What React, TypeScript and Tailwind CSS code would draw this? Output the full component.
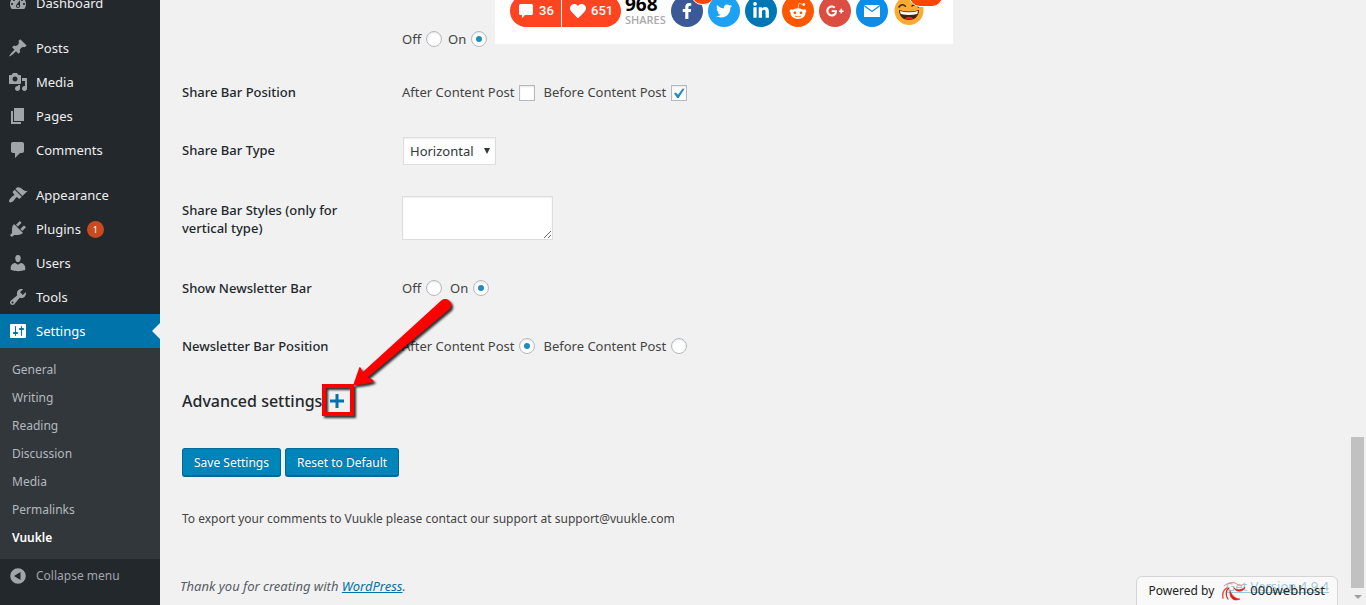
import React from "react";
import { FaFacebookF, FaTwitter, FaLinkedinIn, FaRedditAlien, FaGooglePlusG, FaHeart } from "react-icons/fa";

const icons = {
  dashboard:
    "M3.76 16h12.48c1.1-1.37 1.76-3.11 1.76-5 0-4.42-3.58-8-8-8s-8 3.58-8 8c0 1.89.66 3.63 1.76 5zM10 4c.55 0 1 .45 1 1s-.45 1-1 1-1-.45-1-1 .45-1 1-1zM6 6c.55 0 1 .45 1 1s-.45 1-1 1-1-.45-1-1 .45-1 1-1zm8 0c.55 0 1 .45 1 1s-.45 1-1 1-1-.45-1-1 .45-1 1-1zm-5.37 5.55L12 7v6c0 1.1-.9 2-2 2s-2-.9-2-2c0-.57.24-1.08.63-1.45zM4 10c.55 0 1 .45 1 1s-.45 1-1 1-1-.45-1-1 .45-1 1-1zm12 0c.55 0 1 .45 1 1s-.45 1-1 1-1-.45-1-1 .45-1 1-1zm-5 3c0-.55-.45-1-1-1s-1 .45-1 1 .45 1 1 1 1-.45 1-1z",
  posts:
    "M10.44 3.02l1.82-1.82 6.36 6.35-1.83 1.82c-1.05-.68-2.48-.57-3.41.36l-.75.75c-.92.93-1.04 2.35-.35 3.41l-1.83 1.82-2.41-2.41-2.8 2.79c-.42.42-3.38 2.71-3.8 2.29s1.86-3.39 2.28-3.81l2.79-2.79L4.1 9.36l1.83-1.82c1.05.69 2.48.57 3.4-.36l.75-.75c.93-.92 1.05-2.35.36-3.41z",
  media:
    "M13 11V4c0-.55-.45-1-1-1h-1.67L9 1H5L3.67 3H2c-.55 0-1 .45-1 1v7c0 .55.45 1 1 1h10c.55 0 1-.45 1-1zM7 4.5c1.38 0 2.5 1.12 2.5 2.5S8.38 9.5 7 9.5 4.5 8.38 4.5 7 5.62 4.5 7 4.5zM14 6h5v10.5c0 1.38-1.12 2.5-2.5 2.5S14 17.88 14 16.5s1.12-2.5 2.5-2.5c.17 0 .34.02.5.05V9h-3V6zm-4 8.05V13h2v3.5c0 1.38-1.12 2.5-2.5 2.5S7 17.88 7 16.5 8.12 14 9.5 14c.17 0 .34.02.5.05z",
  pages: "M6 15V2h10v13H6zm-1 1h8v2H3V5h2v11z",
  comments: "M5 2h9c1.1 0 2 .9 2 2v7c0 1.1-.9 2-2 2h-2l-5 5v-5H5c-1.1 0-2-.9-2-2V4c0-1.1.9-2 2-2z",
  appearance:
    "M14.48 11.06L7.41 3.99l1.5-1.5c.5-.56 2.3-.47 3.51.32 1.21.8 1.43 1.28 2.91 2.1 1.18.64 2.45 1.26 4.45.85zm-.71.71L6.7 4.7 4.93 6.47c-.39.39-.39 1.02 0 1.41l1.06 1.06c.39.39.39 1.03 0 1.42-.6.6-1.43 1.11-2.21 1.69-.35.26-.7.53-1.01.84C1.43 14.23.4 16.08 1.4 17.07c.99 1 2.84-.03 4.18-1.36.31-.31.58-.66.85-1.02.57-.78 1.08-1.61 1.69-2.21.39-.39 1.02-.39 1.41 0l1.06 1.06c.39.39 1.02.39 1.41 0z",
  plugins:
    "M13.11 4.36L9.87 7.6 8 5.73l3.24-3.24c.35-.34 1.05-.2 1.56.32.52.51.66 1.21.31 1.55zm-8 1.77l.91-1.12 9.01 9.01-1.19.84c-.71.71-2.63 1.16-3.82 1.16H6.14L4.9 17.26c-.59.59-1.54.59-2.12 0-.59-.58-.59-1.53 0-2.12l1.24-1.24v-3.88c0-1.13.4-3.19 1.09-3.89zm7.26 3.97l3.24-3.24c.34-.35 1.04-.21 1.55.31.52.51.66 1.21.31 1.55l-3.24 3.25z",
  users:
    "M10 9.25c-2.27 0-2.73-3.44-2.73-3.44C7 4.02 7.82 2 9.97 2c2.16 0 2.98 2.02 2.71 3.81 0 0-.41 3.44-2.68 3.44zm0 2.57L12.72 10c2.39 0 4.52 2.33 4.52 4.53v2.49s-3.65 1.13-7.24 1.13c-3.65 0-7.24-1.13-7.24-1.13v-2.49c0-2.25 1.94-4.48 4.47-4.48z",
  tools:
    "M16.68 9.77c-1.34 1.34-3.3 1.67-4.95.99l-5.41 6.52c-.99.99-2.59.99-3.58 0s-.99-2.59 0-3.57l6.52-5.42c-.68-1.65-.35-3.61.99-4.95 1.28-1.28 3.12-1.62 4.72-1.06l-2.89 2.89 2.82 2.82 2.86-2.87c.53 1.58.18 3.39-1.08 4.65zM3.81 16.21c.4.39 1.04.39 1.43 0 .4-.4.4-1.04 0-1.43-.39-.4-1.03-.4-1.43 0-.39.39-.39 1.03 0 1.43z",
  settings:
    "M18 16V4c0-.55-.45-1-1-1H3c-.55 0-1 .45-1 1v12c0 .55.45 1 1 1h14c.55 0 1-.45 1-1zM8 11h1c.55 0 1 .45 1 1s-.45 1-1 1H8v1.5c0 .28-.22.5-.5.5s-.5-.22-.5-.5V13H6c-.55 0-1-.45-1-1s.45-1 1-1h1V5.5c0-.28.22-.5.5-.5s.5.22.5.5V11zm5-2h-1c-.55 0-1-.45-1-1s.45-1 1-1h1V5.5c0-.28.22-.5.5-.5s.5.22.5.5V7h1c.55 0 1 .45 1 1s-.45 1-1 1h-1v5.5c0 .28-.22.5-.5.5s-.5-.22-.5-.5V9z",
  collapse: "M10 2.2a7.8 7.8 0 1 0 0 15.6a7.8 7.8 0 1 0 0-15.6zM12.5 6v8L6 10z",
};

type IconName = keyof typeof icons;

function Icon({ name }: { name: IconName }) {
  return (
    <svg viewBox="0 0 20 20" className="size-5 shrink-0 fill-current" fillRule="evenodd" aria-hidden="true">
      <path d={icons[name]} />
    </svg>
  );
}

function MenuItem({ icon, label, badge, active }: { icon: IconName; label: string; badge?: string; active?: boolean }) {
  return (
    <li>
      <a
        href="#"
        className={
          active
            ? "relative flex h-[34px] items-center gap-2 bg-[#0073aa] px-2 text-white"
            : "flex h-[34px] items-center gap-2 px-2 text-[#eeeeee]"
        }
      >
        <span className={active ? "text-white" : "text-[#a0a5aa]"}>
          <Icon name={icon} />
        </span>
        <span>{label}</span>
        {badge && (
          <span className="-ml-0.5 flex size-[17px] items-center justify-center rounded-full bg-[#ca4a1f] text-[9px] leading-none text-white">
            {badge}
          </span>
        )}
        {active && (
          <span className="absolute right-0 top-1/2 -translate-y-1/2 border-y-8 border-r-8 border-y-transparent border-r-[#f1f1f1]" />
        )}
      </a>
    </li>
  );
}

const submenu = ["General", "Writing", "Reading", "Discussion", "Media", "Permalinks", "Vuukle"];

function Sidebar() {
  return (
    <nav className="w-40 shrink-0 overflow-hidden bg-[#23282d] text-[13px] leading-[18px]">
      <ul className="-mt-3.5">
        <MenuItem icon="dashboard" label="Dashboard" />
        <li className="h-[11px]" />
        <MenuItem icon="posts" label="Posts" />
        <MenuItem icon="media" label="Media" />
        <MenuItem icon="pages" label="Pages" />
        <MenuItem icon="comments" label="Comments" />
        <li className="h-[11px]" />
        <MenuItem icon="appearance" label="Appearance" />
        <MenuItem icon="plugins" label="Plugins" badge="1" />
        <MenuItem icon="users" label="Users" />
        <MenuItem icon="tools" label="Tools" />
        <MenuItem icon="settings" label="Settings" active />
      </ul>
      <ul className="bg-[#32373c] pb-[7px] pt-2 text-xs">
        {submenu.map((s) => (
          <li key={s}>
            <a
              href="#"
              className={
                s === "Vuukle"
                  ? "flex h-7 items-center px-3 font-semibold text-white"
                  : "flex h-7 items-center px-3 text-[#b4b9be]"
              }
            >
              {s}
            </a>
          </li>
        ))}
      </ul>
      <button className="flex h-[34px] w-full items-center gap-2 px-2 text-xs text-[#a0a5aa]">
        <Icon name="collapse" />
        Collapse menu
      </button>
    </nav>
  );
}

function Choice({ type, name, label, checked }: { type: "radio" | "checkbox"; name: string; label: string; checked?: boolean }) {
  return (
    <label className="flex items-center gap-[5px]">
      <span>{label}</span>
      {type === "radio" ? (
        <input
          type="radio"
          name={name}
          defaultChecked={checked}
          className="grid size-4 appearance-none place-items-center rounded-full border border-[#b4b9be] bg-white shadow-[inset_0_1px_2px_rgba(0,0,0,0.1)] checked:before:size-1.5 checked:before:rounded-full checked:before:bg-[#1e8cbe]"
        />
      ) : (
        <span className="relative mt-0.5 flex">
          <input
            type="checkbox"
            name={name}
            defaultChecked={checked}
            className="peer size-4 appearance-none border border-[#b4b9be] bg-white shadow-[inset_0_1px_2px_rgba(0,0,0,0.1)]"
          />
          <svg viewBox="0 0 16 16" className="pointer-events-none absolute inset-0 hidden size-4 peer-checked:block" aria-hidden="true">
            <path d="M3 8.600l2-1.100 2 2.300 4.600-6.200 2 .2-6 9.200h-1.400z" fill="#1e8cbe" />
          </svg>
        </span>
      )}
    </label>
  );
}

function Row({ label, tall, children }: { label: React.ReactNode; tall?: boolean; children: React.ReactNode }) {
  return (
    <div className={tall ? "flex h-20 items-center" : "flex h-[58px] items-center"}>
      <div className="w-[220px] shrink-0 pr-10 text-[13px] font-medium leading-[18px] text-[#23282d]">{label}</div>
      <div className="flex items-center gap-2">{children}</div>
    </div>
  );
}

function Social({ label, color, children }: { label: string; color: string; children: React.ReactNode }) {
  return (
    <a href="#" aria-label={label} className={`relative flex size-8 items-center justify-center rounded-full text-white ${color}`}>
      {children}
    </a>
  );
}

function ShareBar() {
  return (
    <div className="h-11 w-[458px] overflow-hidden bg-white pl-[15px]">
      <div className="-mt-[5px] flex h-8 items-center">
        <div className="flex h-8 w-[111px] shrink-0 overflow-hidden rounded-full bg-[#ff4422] font-[Roboto] text-[13px] font-medium text-white">
          <button className="flex w-[52px] items-center gap-1.5 border-r border-white pl-[9px]">
            <svg viewBox="0 0 14 14" className="size-3.5 fill-current" aria-hidden="true">
              <path d="M1.500 0h11A1.500 1.500 0 0 1 14 1.500v8a1.500 1.500 0 0 1-1.500 1.500H6L3 14v-3H1.500A1.500 1.500 0 0 1 0 9.500v-8A1.500 1.500 0 0 1 1.500 0z" />
            </svg>
            36
          </button>
          <button className="flex items-center gap-[5px] pl-2">
            <FaHeart className="size-4" />
            651
          </button>
        </div>
        <div className="w-[50px] shrink-0 pl-1">
          <div className="font-['Open_Sans'] text-[19px] font-bold leading-[18px] text-black">968</div>
          <div className="font-['Open_Sans'] text-[11px] font-semibold leading-[14px] text-[#aaaaaa]">SHARES</div>
        </div>
        <div className="flex gap-[5px]">
          <Social label="Facebook" color="bg-[#3b5998]">
            <FaFacebookF className="size-4" />
            <span className="absolute -top-3 left-5 h-[22px] w-6 rounded-full border border-white bg-[#ff4500]" />
          </Social>
          <Social label="Twitter" color="bg-[#1da1f2]"><FaTwitter className="size-4" /></Social>
          <Social label="LinkedIn" color="bg-[#0077b5]"><FaLinkedinIn className="size-[18px]" /></Social>
          <Social label="Reddit" color="bg-[#ff5700]"><FaRedditAlien className="size-[18px]" /></Social>
          <Social label="Google Plus" color="bg-[#dc4e41]"><FaGooglePlusG className="size-[18px]" /></Social>
          <Social label="Email" color="bg-[#0a8eea]">
            <svg viewBox="0 0 16 12" className="h-3 w-4" aria-hidden="true">
              <path d="M0 0h16v12H0z" fill="#fff" />
              <path d="M0 .5l8 6 8-6" fill="none" stroke="#0a8eea" strokeWidth="1.200" />
            </svg>
          </Social>
          <Social label="Reactions" color="bg-white">
            <svg viewBox="0 0 32 32" className="size-8" aria-hidden="true">
              <circle cx="16" cy="15.500" r="14.500" fill="#fbab2f" />
              <path d="M6 12q3-4 6.500-.8M19 11q3.500-3 6.500 1" fill="none" stroke="#42210b" strokeWidth="1.500" strokeLinecap="round" />
              <path d="M6 15q10 3 20 0c0 6-4 10-10 10S6 21 6 15z" fill="#42210b" />
              <path d="M7 16q9 2.600 18 0l-.7 3q-8.300 2-16.600 0z" fill="#fff" />
              <path d="M11.500 23.300q4.500-3 9 0q-4.500 2.500-9 0z" fill="#ed1c24" />
            </svg>
            <span className="absolute -top-2.5 left-4 h-[22px] w-[34px] rounded-full border border-white bg-[#ff4500]" />
          </Social>
        </div>
      </div>
    </div>
  );
}

function Annotation() {
  return (
    <svg viewBox="0 0 150 130" className="pointer-events-none absolute left-[150px] top-[294px] h-[130px] w-[150px]" aria-hidden="true">
      <g className="drop-shadow-[2px_2px_1px_rgba(0,0,0,0.8)]">
        <rect x="14" y="92" width="28" height="28" fill="none" stroke="#f00" strokeWidth="4" />
        <path
          d="M43 91.500L49.500 73q1.500 0 3 5.200L131.500 6.300A6 6 0 0 1 139.700 15L57.500 83.500q6 2 6.500 3.800Q62 89.500 43 91.500z"
          fill="#f00"
        />
      </g>
    </svg>
  );
}

function HostBadge() {
  return (
    <a
      href="#"
      className="absolute -bottom-px right-[13px] flex h-[30px] items-center rounded-t-md border border-[#d5d5d5] bg-white/60 px-3 text-xs text-[#222222]"
    >
      Powered by
      <svg viewBox="0 0 24 20" className="ml-2 h-5 w-6" fill="none" strokeLinecap="round" aria-hidden="true">
        <path d="M1 17C0 12 2 8 5 7" stroke="#e2574d" strokeWidth="1.500" />
        <path d="M6 18C3 14 4 9 7 7" stroke="#dd1f12" strokeWidth="1.200" />
        <path d="M2 5Q6 1 10 3M8 2Q12 0 15 3T22 3" stroke="#ee8b83" strokeWidth="1" />
        <path d="M12 7c3 3 8 2 11-1-1 5-9 6-11 1z" fill="#dd1f12" stroke="#dd1f12" strokeWidth=".6" />
        <path d="M8 10c-1 7 4 11 10 8-4 0-8-3-10-8z" fill="#dd1f12" stroke="#dd1f12" strokeWidth=".6" />
      </svg>
      <span className="ml-1 text-[13px]">000webhost</span>
    </a>
  );
}

export default function App() {
  return (
    <div className="flex h-screen overflow-hidden bg-[#f1f1f1] font-['Noto_Sans','Open_Sans',sans-serif] text-[13px] leading-[18px] text-[#444444]">
      <Sidebar />
      <main className="relative min-w-0 flex-1 pl-[22px]">
        <form onSubmit={(e) => e.preventDefault()}>
          <div className="flex h-[63px] pl-[220px]">
            <div className="flex w-[93px] items-end gap-1.5 pb-[15px]">
              <Choice type="radio" name="share" label="Off" />
              <Choice type="radio" name="share" label="On" checked />
            </div>
            <ShareBar />
          </div>
          <Row label="Share Bar Position">
            <Choice type="checkbox" name="after" label="After Content Post" />
            <Choice type="checkbox" name="before" label="Before Content Post" checked />
          </Row>
          <Row label={<label htmlFor="type">Share Bar Type</label>}>
            <div className="relative ml-px mt-0.5">
              <select
                id="type"
                className="block h-7 w-[93px] appearance-none border border-[#dddddd] bg-white pl-1.5 text-[13px] text-[#32373c] shadow-[inset_0_1px_2px_rgba(0,0,0,0.07)]"
              >
                <option>Horizontal</option>
                <option>Vertical</option>
              </select>
              <span className="pointer-events-none absolute right-1.5 top-[11px] border-x-[3px] border-t-[6px] border-x-transparent border-t-[#32373c]" />
            </div>
          </Row>
          <Row tall label={<label htmlFor="styles">Share Bar Styles (only for vertical type)</label>}>
            <textarea
              id="styles"
              className="mb-0.5 h-11 w-[151px] border border-[#dddddd] bg-white shadow-[inset_0_1px_2px_rgba(0,0,0,0.07)]"
            />
          </Row>
          <Row label="Show Newsletter Bar">
            <Choice type="radio" name="newsletter" label="Off" />
            <Choice type="radio" name="newsletter" label="On" checked />
          </Row>
          <Row label="Newsletter Bar Position">
            <Choice type="radio" name="position" label="After Content Post" checked />
            <Choice type="radio" name="position" label="Before Content Post" />
          </Row>
          <div className="flex h-[52px] items-center gap-2">
            <h2 className="text-base font-medium text-[#23282d]">Advanced settings</h2>
            <button aria-label="Expand advanced settings">
              <svg viewBox="0 0 14 14" className="size-3.5" aria-hidden="true">
                <path d="M5.500 0h3v5.500H14v3H8.500V14h-3V8.500H0v-3h5.500z" fill="#0073aa" />
              </svg>
            </button>
          </div>
          <div className="mt-[21px] flex gap-1">
            <button className="h-[29px] rounded-[3px] border border-b-2 border-[#006799] bg-[#0085ba] px-[11px] pt-px text-xs text-white [text-shadow:0_-1px_1px_#006799]">
              Save Settings
            </button>
            <button className="h-[29px] rounded-[3px] border border-b-2 border-[#006799] bg-[#0085ba] px-[11px] pt-px text-xs text-white [text-shadow:0_-1px_1px_#006799]">
              Reset to Default
            </button>
          </div>
          <p className="mt-[33px] text-xs leading-[18px]">
            To export your comments to Vuukle please contact our support at support@vuukle.com
          </p>
        </form>
        <footer className="-ml-0.5 mt-[49px] flex justify-between pr-[22px] text-[13px] leading-[18px] text-[#555d66]">
          <p className="italic">
            Thank you for creating with <a href="#" className="text-[#0073aa] underline">WordPress</a>.
          </p>
          <a href="#" className="text-[#0073aa] underline">Get Version 4.9.4</a>
        </footer>
        <HostBadge />
        <Annotation />
      </main>
      <div className="flex w-[15px] shrink-0 flex-col items-center justify-end pb-1.5 pr-0.5" aria-hidden="true">
        <div className="h-[151px] w-full bg-[#c1c1c1]" />
        <span className="mt-[7px] border-x-4 border-t-4 border-x-transparent border-t-[#a0a0a0]" />
      </div>
    </div>
  );
}
